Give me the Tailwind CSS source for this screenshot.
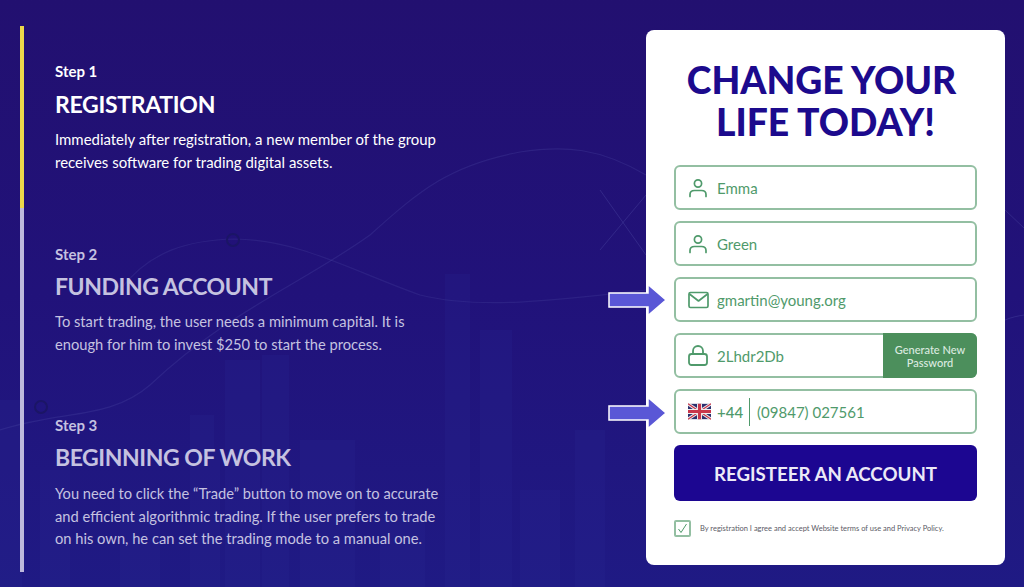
<!DOCTYPE html>
<html lang="en">
<head>
    <meta charset="UTF-8">
    <meta name="viewport" content="width=device-width, initial-scale=1.0">
    <script src="https://cdn.jsdelivr.net/npm/@tailwindcss/browser@4"></script>
    <title>Change your life today</title>
</head>
<body class="m-0 overflow-hidden font-['Lato',sans-serif]">
    <div class="relative w-[1024px] h-[587px] overflow-hidden bg-gradient-to-b from-[#221070] via-[#21127a] to-[#1f1a84]">
        <!-- background chart -->
        <svg class="absolute inset-0" width="1024" height="587" viewBox="0 0 1024 587" fill="none">
            <g fill="#2a2a96" opacity="0.2">
                <rect x="0" y="400" width="22" height="187"/>
                <rect x="190" y="450" width="30" height="137"/>
                <rect x="225" y="360" width="35" height="227"/>
                <rect x="262" y="355" width="27" height="232"/>
                <rect x="190" y="415" width="24" height="172"/>
                <rect x="300" y="440" width="55" height="147"/>
                <rect x="445" y="274" width="25" height="313"/>
                <rect x="480" y="330" width="32" height="257"/>
                <rect x="520" y="490" width="40" height="97"/>
                <rect x="575" y="430" width="30" height="157"/>
                <rect x="40" y="470" width="30" height="117"/>
                <rect x="120" y="500" width="40" height="87"/>
                <rect x="380" y="510" width="45" height="77"/>
            </g>
            <path d="M0 430 C60 410 110 420 150 385 C230 310 300 285 370 235 C420 190 450 165 520 152 C565 145 600 148 646 175" stroke="#5a5ab0" stroke-width="1.2" opacity="0.22"/>
            <path d="M120 290 C150 250 190 240 235 239 C300 240 350 270 420 295 C480 310 560 300 646 290" stroke="#5a5ab0" stroke-width="1.2" opacity="0.2"/>
            <path d="M600 190 L646 255 M600 250 L646 195" stroke="#5a5ab0" stroke-width="1" opacity="0.3"/>
            <path d="M1005 210 L1024 228 M1005 320 C1012 317 1018 316 1024 315" stroke="#5a5ab0" stroke-width="1" opacity="0.3"/>
            <circle cx="233" cy="240" r="6" stroke="#1b1566" stroke-width="2"/>
            <circle cx="41" cy="407" r="6" stroke="#1b1566" stroke-width="2"/>
        </svg>

        <div class="relative flex items-start">
            <!-- steps -->
            <div class="ml-[20px] mt-[26px] w-[4px] h-[546px] shrink-0 bg-[#bdb9dc] flex flex-col">
                <div class="h-[182px] bg-[#ecd84a]"></div>
            </div>
            <div class="ml-[31px] mt-[26px] w-[400px] shrink-0">
                <section class="pt-[36px] text-white h-[182px]">
                    <p class="text-[15px] leading-[18px] font-bold">Step 1</p>
                    <h2 class="mt-[8px] text-[23px] leading-[32px] font-bold tracking-[-0.3px]">REGISTRATION</h2>
                    <p class="mt-[8px] text-[14.95px] leading-[22.5px]">Immediately after registration, a new member of the group receives software for trading digital assets.</p>
                </section>
                <section class="pt-[37px] text-[#c5c2e0] h-[171px]">
                    <p class="text-[15px] leading-[18px] font-bold">Step 2</p>
                    <h2 class="mt-[7px] text-[23px] leading-[32px] font-bold tracking-[-0.45px]">FUNDING ACCOUNT</h2>
                    <p class="mt-[8px] text-[14.7px] leading-[22.5px]">To start trading, the user needs a minimum capital. It is enough for him to invest $250 to start the process.</p>
                </section>
                <section class="pt-[37px] text-[#c5c2e0]">
                    <p class="text-[15px] leading-[18px] font-bold">Step 3</p>
                    <h2 class="mt-[7px] text-[23px] leading-[32px] font-bold tracking-[-0.45px]">BEGINNING OF WORK</h2>
                    <p class="mt-[9px] text-[14.7px] leading-[22.5px]">You need to click the “Trade” button to move on to accurate and efficient algorithmic trading. If the user prefers to trade on his own, he can set the trading mode to a manual one.</p>
                </section>
            </div>

            <!-- form card -->
            <div class="ml-[191px] mt-[30px] w-[359px] h-[535px] shrink-0 bg-white rounded-lg px-[28px] pt-[29px]">
                <h1 class="text-center text-[37.3px] leading-[42px] font-black text-[#1c0a8d]"><span class="inline-block pr-[8px]">CHANGE YOUR</span><br>LIFE TODAY!</h1>
                <form class="mt-[22px] flex flex-col gap-[11px]">
                    <div class="h-[45px] border-2 border-[#93bfa2] rounded-md flex items-center pl-[12px] text-[#4f9a6b] text-[15px]">
                        <svg class="w-[20px] h-[20px] shrink-0" viewBox="0 0 20 20" fill="none" stroke="#4f9a6b" stroke-width="1.7"><circle cx="10" cy="5.500" r="3.600"/><path d="M2 18.500v-2c0-2.500 2-4 4.500-4h7c2.500 0 4.500 1.500 4.500 4v2" stroke-linecap="round"/></svg>
                        <span class="ml-[9px] mt-[2px]">Emma</span>
                    </div>
                    <div class="h-[45px] border-2 border-[#93bfa2] rounded-md flex items-center pl-[12px] text-[#4f9a6b] text-[15px]">
                        <svg class="w-[20px] h-[20px] shrink-0" viewBox="0 0 20 20" fill="none" stroke="#4f9a6b" stroke-width="1.7"><circle cx="10" cy="5.500" r="3.600"/><path d="M2 18.500v-2c0-2.500 2-4 4.500-4h7c2.500 0 4.500 1.500 4.500 4v2" stroke-linecap="round"/></svg>
                        <span class="ml-[9px] mt-[2px]">Green</span>
                    </div>
                    <div class="h-[45px] border-2 border-[#93bfa2] rounded-md flex items-center pl-[12px] text-[#4f9a6b] text-[15px]">
                        <svg class="w-[21px] h-[18px] shrink-0" viewBox="0 0 21 18" fill="none" stroke="#4f9a6b" stroke-width="1.700"><rect x="1" y="1.500" width="19" height="15" rx="1.500"/><path d="M1.500 3l9 7 9-7" stroke-linejoin="round"/></svg>
                        <span class="ml-[8px] mt-[2px]">gmartin@young.org</span>
                    </div>
                    <div class="h-[45px] border-2 border-[#93bfa2] rounded-md flex items-center pl-[12px] text-[#4f9a6b] text-[15px]">
                        <svg class="w-[20px] h-[21px] shrink-0" viewBox="0 0 20 21" fill="none" stroke="#4f9a6b" stroke-width="1.800"><rect x="1" y="9" width="18" height="11" rx="2.500"/><path d="M5 9V6a5 5 0 0 1 10 0v3"/></svg>
                        <span class="ml-[9px] mt-[2px]">2Lhdr2Db</span>
                        <button type="button" class="ml-auto h-[45px] -my-[2px] -mr-[2px] w-[94px] shrink-0 bg-[#4c8f5c] rounded-r-md text-[#dcebe0] text-[11px] leading-[13px] font-medium">Generate New Password</button>
                    </div>
                    <div class="h-[45px] border-2 border-[#93bfa2] rounded-md flex items-center pl-[12px] text-[#4f9a6b] text-[15px]">
                        <svg class="w-[23px] h-[17px] shrink-0" viewBox="0 0 60 40">
                            <rect width="60" height="40" fill="#2b2f6e"/>
                            <path d="M0 0L60 40M60 0L0 40" stroke="#eee" stroke-width="8"/>
                            <path d="M0 0L60 40M60 0L0 40" stroke="#c8354b" stroke-width="3"/>
                            <path d="M30 0V40M0 20H60" stroke="#eee" stroke-width="13"/>
                            <path d="M30 0V40M0 20H60" stroke="#c8354b" stroke-width="8"/>
                        </svg>
                        <span class="ml-[6px] mt-[2px] font-medium">+44</span>
                        <span class="ml-[6px] w-px h-[28px] bg-[#4f9a6b]"></span>
                        <span class="ml-[7px] mt-[2px]">(09847) 027561</span>
                    </div>
                    <button type="button" class="h-[56px] pt-[2px] bg-[#1c0691] rounded-md text-[#eceaf7] text-[18.700px] font-bold">REGISTEER AN ACCOUNT</button>
                </form>
                <div class="mt-[19px] flex items-center">
                    <span class="w-[17px] h-[17px] border-2 border-[#93bfa2] rounded-[2px] flex items-center justify-center shrink-0">
                        <svg class="w-[11px] h-[11px]" viewBox="0 0 11 11" fill="none" stroke="#4f9a6b" stroke-width="1"><path d="M1.500 6l2.500 3.500L9.500 1"/></svg>
                    </span>
                    <span class="ml-[9px] text-[7.500px] text-[#5b5b66]">By registration I agree and accept Website terms of use and Privacy Policy.</span>
                </div>
            </div>
        </div>

        <!-- arrows -->
        <svg class="absolute left-[608px] top-[283px]" width="60" height="34" viewBox="0 0 60 34"><path d="M1 10H40V1.500L58 17 40 32.500V24H1Z" fill="#5a57d6" stroke="#fff" stroke-width="1.500"/></svg>
        <svg class="absolute left-[608px] top-[396px]" width="60" height="34" viewBox="0 0 60 34"><path d="M1 10H40V1.500L58 17 40 32.500V24H1Z" fill="#5a57d6" stroke="#fff" stroke-width="1.500"/></svg>
    </div>
</body>
</html>
